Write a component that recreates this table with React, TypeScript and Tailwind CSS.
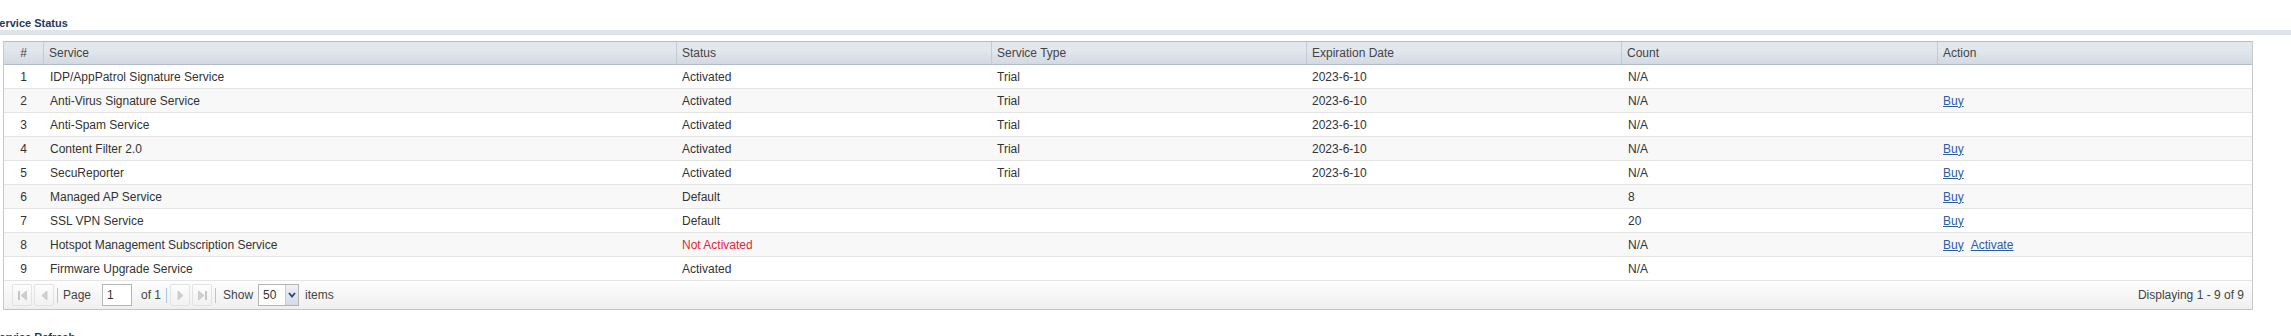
import React from "react";

type Row = {
  no: number;
  service: string;
  status: string;
  type: string;
  expires: string;
  count: string;
  actions: string[];
};

const rows: Row[] = [
  { no: 1, service: "IDP/AppPatrol Signature Service", status: "Activated", type: "Trial", expires: "2023-6-10", count: "N/A", actions: [] },
  { no: 2, service: "Anti-Virus Signature Service", status: "Activated", type: "Trial", expires: "2023-6-10", count: "N/A", actions: ["Buy"] },
  { no: 3, service: "Anti-Spam Service", status: "Activated", type: "Trial", expires: "2023-6-10", count: "N/A", actions: [] },
  { no: 4, service: "Content Filter 2.0", status: "Activated", type: "Trial", expires: "2023-6-10", count: "N/A", actions: ["Buy"] },
  { no: 5, service: "SecuReporter", status: "Activated", type: "Trial", expires: "2023-6-10", count: "N/A", actions: ["Buy"] },
  { no: 6, service: "Managed AP Service", status: "Default", type: "", expires: "", count: "8", actions: ["Buy"] },
  { no: 7, service: "SSL VPN Service", status: "Default", type: "", expires: "", count: "20", actions: ["Buy"] },
  { no: 8, service: "Hotspot Management Subscription Service", status: "Not Activated", type: "", expires: "", count: "N/A", actions: ["Buy", "Activate"] },
  { no: 9, service: "Firmware Upgrade Service", status: "Activated", type: "", expires: "", count: "N/A", actions: [] },
];

const cols = "grid grid-cols-[39px_633px_315px_315px_315px_316px_315px]";

function HeaderCell({ children, first }: { children: React.ReactNode; first?: boolean }) {
  return (
    <div
      className={`flex h-full items-center ${first ? "justify-center" : "border-l border-[#c3cad4] pl-[5px]"}`}
    >
      {children}
    </div>
  );
}

function PagerButton({ children }: { children: React.ReactNode }) {
  return (
    <div className="flex h-[22px] w-[20px] items-center justify-center rounded-[2px] border border-[#e2e2e2] bg-gradient-to-b from-[#fdfdfd] to-[#f1f1f1]">
      {children}
    </div>
  );
}

function Sep() {
  return <div className="h-[15px] w-px bg-[#a9c7e8]" />;
}

export default function App() {
  return (
    <div className="h-[336px] w-[2291px] overflow-hidden bg-white font-['Liberation_Sans',Arial,sans-serif] text-[12px] text-[#333]">
      <div className="h-[30px] pt-[17px]">
        <div className="-ml-[8px] text-[11px] font-bold leading-[13px] text-[#1d3a66]">Service Status</div>
      </div>
      <div className="h-[5px] bg-[#dfe4eb]" />

      <div className="ml-[3px] mt-[6px] w-[2250px] border border-t-[#b4bbc5] border-x-[#c9c9c9] border-b-[#c4c4c4]">
        {/* header */}
        <div className={`${cols} h-[23px] border-b border-[#b3bcc9] bg-gradient-to-b from-[#e2e6ed] from-40% to-[#d3d9e2] text-[#444]`}>
          <HeaderCell first>#</HeaderCell>
          <HeaderCell>Service</HeaderCell>
          <HeaderCell>Status</HeaderCell>
          <HeaderCell>Service Type</HeaderCell>
          <HeaderCell>Expiration Date</HeaderCell>
          <HeaderCell>Count</HeaderCell>
          <HeaderCell>Action</HeaderCell>
        </div>

        {/* rows */}
        {rows.map((r) => (
          <div
            key={r.no}
            className={`${cols} h-[24px] items-center border-b border-[#e4e4e4] ${r.no % 2 === 0 ? "bg-[#f8f8f8]" : "bg-white"}`}
          >
            <div className="text-center">{r.no}</div>
            <div className="pl-[7px]">{r.service}</div>
            <div className={`pl-[6px] ${r.status === "Not Activated" ? "text-[#e3263a]" : ""}`}>{r.status}</div>
            <div className="pl-[6px]">{r.type}</div>
            <div className="pl-[6px]">{r.expires}</div>
            <div className="pl-[7px]">{r.count}</div>
            <div className="flex gap-[7px] pl-[6px]">
              {r.actions.map((a) => (
                <a key={a} className="cursor-pointer text-[#2b5ca6] underline">
                  {a}
                </a>
              ))}
            </div>
          </div>
        ))}

        {/* pager */}
        <div className="flex h-[28px] items-center bg-gradient-to-b from-[#fdfdfd] to-[#efefef] pl-[8px] pr-[8px] text-[#444]">
          <PagerButton>
            <svg width="11" height="11" viewBox="0 0 11 11">
              <rect x="1" y="1" width="2" height="9" fill="#c4c4c4" />
              <path d="M9.5 1 L4 5.5 L9.5 10 Z" fill="#cfcfcf" stroke="#bcbcbc" strokeWidth="0.6" />
            </svg>
          </PagerButton>
          <div className="ml-[2px]">
            <PagerButton>
              <svg width="9" height="11" viewBox="0 0 9 11">
                <path d="M7 1 L2 5.5 L7 10 Z" fill="#cfcfcf" stroke="#bcbcbc" strokeWidth="0.6" />
              </svg>
            </PagerButton>
          </div>
          <div className="ml-[3px]">
            <Sep />
          </div>
          <span className="ml-[5px]">Page</span>
          <div className="ml-[11px] flex h-[22px] w-[30px] items-center border border-[#b5b5b5] bg-white pl-[4px] text-[#333]">1</div>
          <span className="ml-[9px]">of 1</span>
          <div className="ml-[5px]">
            <Sep />
          </div>
          <div className="ml-[3px]">
            <PagerButton>
              <svg width="9" height="11" viewBox="0 0 9 11">
                <path d="M2 1 L7 5.5 L2 10 Z" fill="#cfcfcf" stroke="#bcbcbc" strokeWidth="0.6" />
              </svg>
            </PagerButton>
          </div>
          <div className="ml-[2px]">
            <PagerButton>
              <svg width="11" height="11" viewBox="0 0 11 11">
                <path d="M1.5 1 L7 5.5 L1.5 10 Z" fill="#cfcfcf" stroke="#bcbcbc" strokeWidth="0.6" />
                <rect x="8" y="1" width="2" height="9" fill="#c4c4c4" />
              </svg>
            </PagerButton>
          </div>
          <div className="ml-[3px]">
            <Sep />
          </div>
          <span className="ml-[7px]">Show</span>
          <div className="ml-[5px] flex h-[22px] w-[41px] items-stretch border border-[#b5b5b5] bg-white">
            <span className="flex flex-1 items-center pl-[4px] text-[#333]">50</span>
            <span className="flex w-[13px] items-center justify-center border-l border-[#c7ccd4] bg-gradient-to-b from-[#eef1f5] to-[#d5dbe4]">
              <svg width="8" height="6" viewBox="0 0 8 6">
                <path d="M1 1 L4 4.5 L7 1" fill="none" stroke="#24487a" strokeWidth="1.8" />
              </svg>
            </span>
          </div>
          <span className="ml-[6px]">items</span>
          <span className="ml-auto">Displaying 1 - 9 of 9</span>
        </div>
      </div>

      <div className="-ml-[8px] mt-[21px] text-[11px] font-bold leading-[13px] text-[#1d3a66]">Service Refresh</div>
    </div>
  );
}
